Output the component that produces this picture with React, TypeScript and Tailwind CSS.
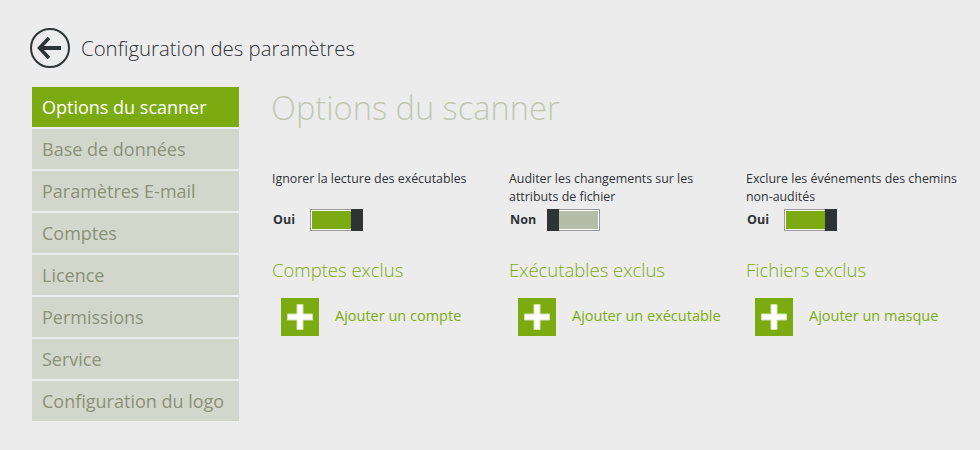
const menu = [
  'Options du scanner',
  'Base de données',
  'Paramètres E-mail',
  'Comptes',
  'Licence',
  'Permissions',
  'Service',
  'Configuration du logo',
]

const columns = [
  { label: ['Ignorer la lecture des exécutables'], on: true, group: 'Comptes exclus', action: 'Ajouter un compte' },
  { label: ['Auditer les changements sur les', 'attributs de fichier'], on: false, group: 'Exécutables exclus', action: 'Ajouter un exécutable' },
  { label: ['Exclure les événements des chemins', 'non-audités'], on: true, group: 'Fichiers exclus', action: 'Ajouter un masque' },
]

function Toggle({ on }: { on: boolean }) {
  return (
    <div className="flex items-center">
      <span className="w-[37px] pl-[1px] text-[12.5px] font-bold text-[#2e3336]">{on ? 'Oui' : 'Non'}</span>
      <div className={`ml-[1px] flex h-[22px] w-[53px] ${on ? '' : 'flex-row-reverse'}`}>
        <div className={`flex-1 border border-[#9a9a9a] bg-white py-[1px] ${on ? 'border-r-0 pl-[1px]' : 'border-l-0 pr-[1px]'}`}>
          <div className={`h-full ${on ? 'bg-[#7cab11]' : 'bg-[#b6bda7]'}`} />
        </div>
        <div className="w-[12px] bg-[#2e3336]" />
      </div>
    </div>
  )
}

export default function App() {
  return (
    <div className="h-[450px] w-[980px] overflow-hidden bg-[#ececec] pl-[30px] pt-[28px] font-['Open_Sans',sans-serif]">
      <div className="flex h-[40px] items-center">
        <svg width="40" height="40" viewBox="0 0 40 40" fill="none">
          <circle cx="20" cy="20" r="19" stroke="#2e3336" strokeWidth="2" />
          <path d="M31 20H11" stroke="#2e3336" strokeWidth="4" />
          <path d="M19 10L9.5 20l9.5 10" stroke="#2e3336" strokeWidth="3.5" />
        </svg>
        <h1 className="ml-[11px] text-[20.4px] font-light text-[#2e3336]">Configuration des paramètres</h1>
      </div>

      <div className="mt-[19px] flex">
        <nav className="ml-[2px] flex w-[207px] flex-col gap-[2px]">
          {menu.map((item, i) => (
            <div
              key={item}
              className={`flex h-[40px] items-center pl-[10px] text-[18px] whitespace-nowrap ${
                i === 0 ? 'bg-[#7cab11] text-white' : 'bg-[#d3d7cb] text-[#8b9079]'
              }`}
            >
              {item}
            </div>
          ))}
        </nav>

        <main className="ml-[33px]">
          <h2 className="mt-[-1px] ml-[-1px] text-[32.6px] leading-[44px] font-light text-[#c2c8b5]">Options du scanner</h2>

          <div className="mt-[40px] grid grid-cols-[237px_237px_234px]">
            {columns.map((col) => (
              <div key={col.group}>
                <div className="h-[36px] text-[12.4px] leading-[18px] text-[#2e3336]">
                  {col.label.map((line) => (
                    <div key={line} className="whitespace-nowrap">{line}</div>
                  ))}
                </div>
                <div className="mt-[3px]">
                  <Toggle on={col.on} />
                </div>
                <h3 className="mt-[26px] text-[18.5px] leading-[26px] font-light text-[#7cab11]">{col.group}</h3>
                <div className="mt-[15px] ml-[9px] flex items-center">
                  <div className="flex h-[38px] w-[38px] items-center justify-center bg-[#7cab11]">
                    <svg width="26" height="26" viewBox="0 0 26 26">
                      <path
                        d="M10 .5h6V10h9.5v6H16v9.5h-6V16H.5v-6H10z"
                        fill="#fff"
                        stroke="#d6e3ae"
                        strokeWidth="1"
                      />
                    </svg>
                  </div>
                  <span className="ml-[16px] pb-[2px] text-[14.5px] whitespace-nowrap text-[#7cab11]">{col.action}</span>
                </div>
              </div>
            ))}
          </div>
        </main>
      </div>
    </div>
  )
}
